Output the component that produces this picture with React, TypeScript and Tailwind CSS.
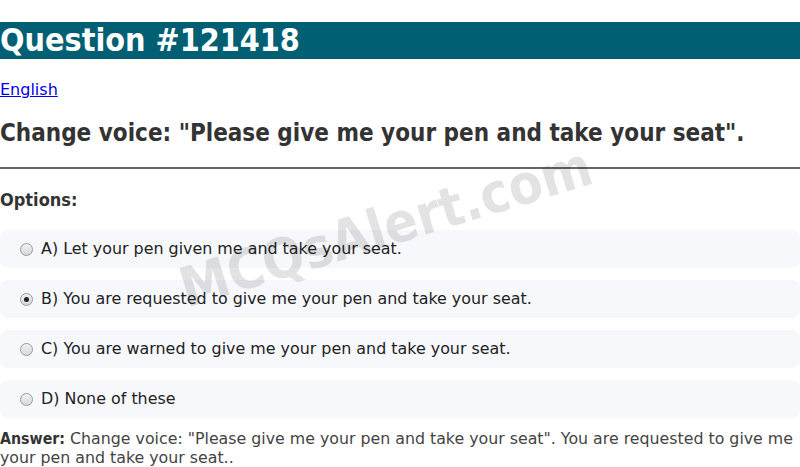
import React from 'react';

const options = [
  { key: 'A', text: 'Let your pen given me and take your seat.' },
  { key: 'B', text: 'You are requested to give me your pen and take your seat.', checked: true },
  { key: 'C', text: 'You are warned to give me your pen and take your seat.' },
  { key: 'D', text: 'None of these' },
];

function Radio({ checked }: { checked?: boolean }) {
  return (
    <span className="flex h-[13px] w-[13px] shrink-0 items-center justify-center rounded-full border border-[#9a9a9a] bg-gradient-to-b from-[#f2f2f2] to-[#d8d8d8]">
      {checked && <span className="h-[5px] w-[5px] rounded-full bg-[#222]" />}
    </span>
  );
}

export default function App() {
  return (
    <div className="relative overflow-hidden bg-white pb-[1px] font-['DejaVu_Sans',sans-serif]">
      <h1 className="mt-[22px] bg-[#005f73] font-['DejaVu_Sans_Condensed',sans-serif] text-[32px] font-bold leading-[37px] text-white">
        Question #121418
      </h1>

      <div className="mt-[21px] text-[16px] leading-[19px]">
        <a href="#" className="text-[#0000ee] underline">English</a>
      </div>

      <h2 className="mt-[20px] font-['DejaVu_Sans_Condensed',sans-serif] text-[24px] font-bold leading-[28px] text-[#333]">
        Change voice: "Please give me your pen and take your seat".
      </h2>

      <hr className="mt-[20px] border-t-2 border-[#666]" />

      <h3 className="mt-[20px] font-['DejaVu_Sans_Condensed',sans-serif] text-[18px] font-bold leading-[21px] text-[#333]">Options:</h3>

      <div className="mt-[20px] flex flex-col gap-[12px]">
        {options.map((o) => (
          <div key={o.key} className="flex h-[38px] items-center gap-[8px] rounded-lg bg-[#f7f8fc] pl-[20px] text-[15.9px] text-[#222]">
            <Radio checked={o.checked} />
            <span>{o.key}) {o.text}</span>
          </div>
        ))}
      </div>

      <p className="mt-[11px] text-[15.8px] leading-[19px] text-[#444]">
        <b className="font-['DejaVu_Sans_Condensed',sans-serif] text-[#333]">Answer:</b> Change voice: "Please give me your pen and take your seat". You are requested to give me your pen and take your seat..
      </p>

      {/* watermark */}
      <div className="pointer-events-none absolute left-[172px] top-[200px] -rotate-[17deg] select-none font-['DejaVu_Sans_Condensed',sans-serif] text-[55px] font-bold leading-none text-black/[0.11]">
        MCQsAlert.com
      </div>
    </div>
  );
}
